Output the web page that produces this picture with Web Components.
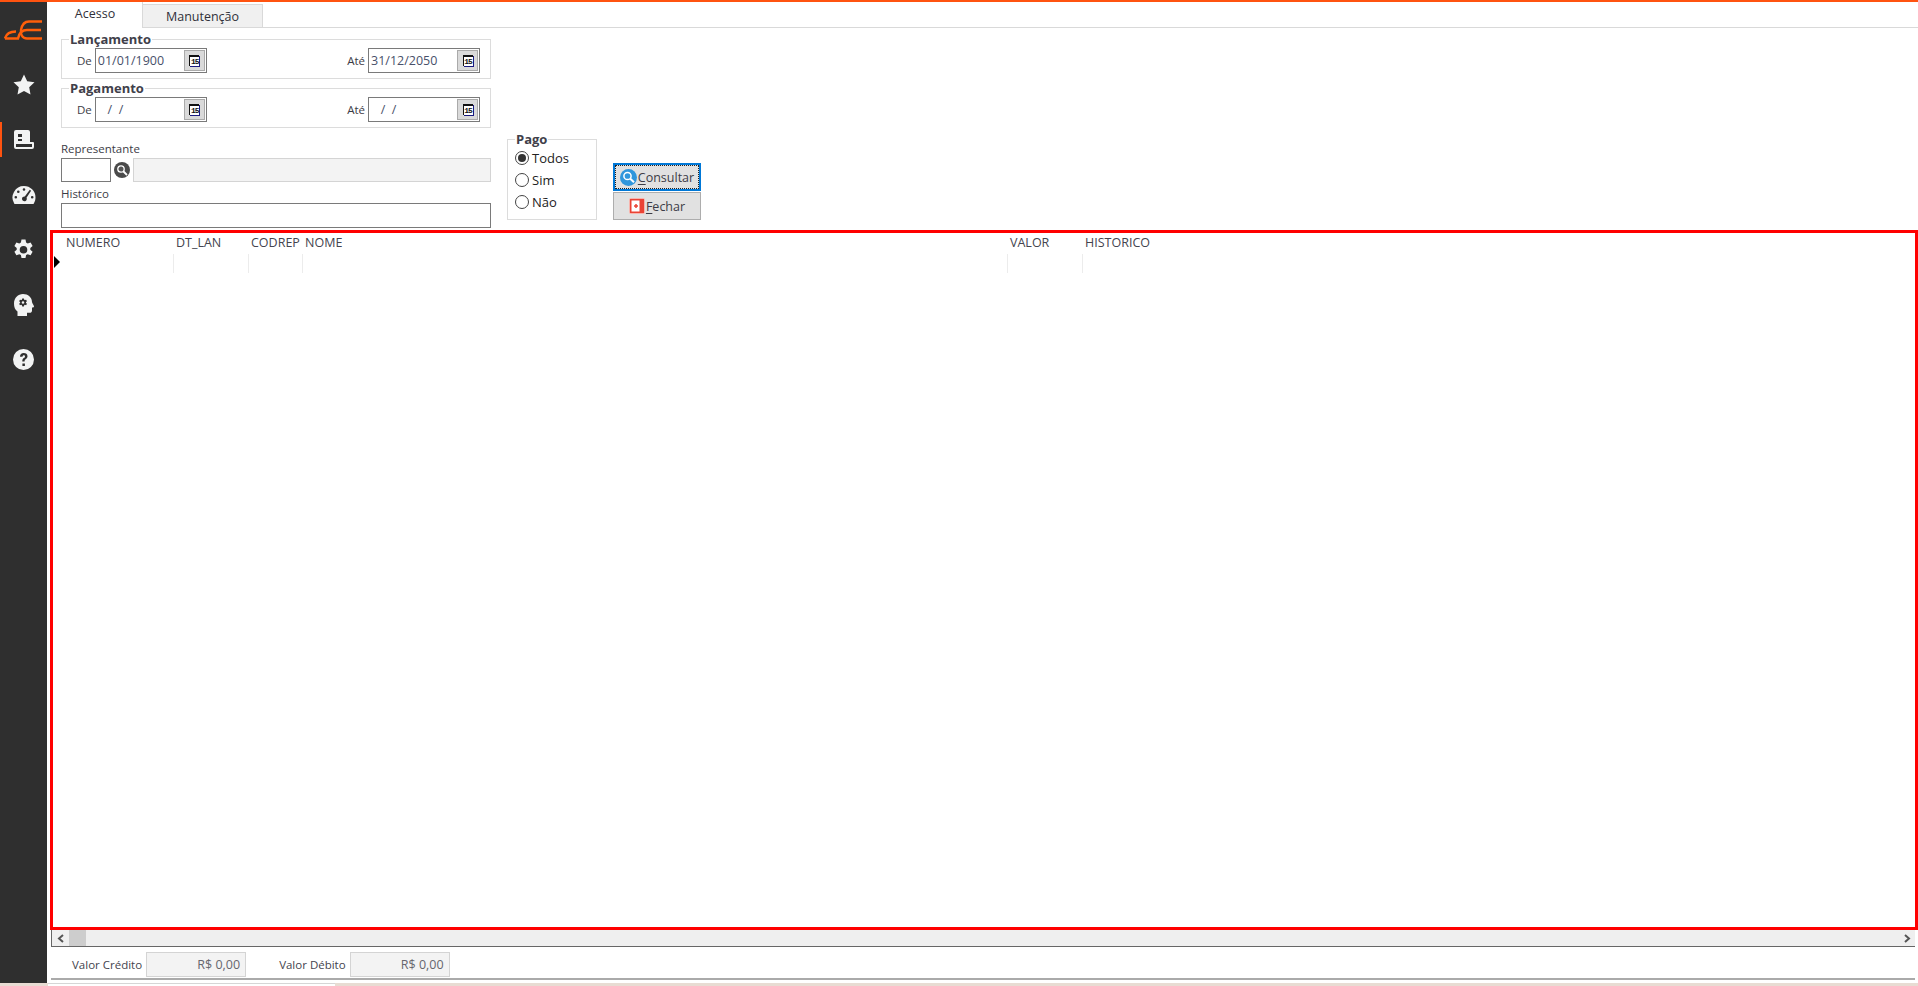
<!DOCTYPE html>
<html lang="pt-BR">
<head>
<meta charset="utf-8">
<title>Acesso</title>
<style>
  html, body { margin: 0; height: 100%; overflow: hidden; background: #fff; }
  body { font: 12px "Open Sans", "Liberation Sans", sans-serif; color: #3c3c46; }
</style>
</head>
<body>
<erp-app>
  <side-nav slot="nav"></side-nav>
  <tab-strip></tab-strip>
  <filter-panel></filter-panel>
  <data-grid></data-grid>
  <grid-scrollbar></grid-scrollbar>
  <totals-bar></totals-bar>
</erp-app>

<script>
customElements.define(
  "erp-app",
  class extends HTMLElement {
    constructor() {
      super();
      this.attachShadow({ mode: "open" });
      this.shadowRoot.innerHTML = `
        <style>
          :host { display: flex; flex-direction: column; height: 986px; }
          .top { height: 2px; background: #ff5310; flex: none; }
          .body { flex: 1; display: flex; min-height: 0; }
          .main { flex: 1; min-width: 0; display: flex; flex-direction: column; padding-left: 1px; }
          .end { flex: none; height: 3px; background: #e8dcd3; padding-left: 48px; }
          .end div { width: 287px; height: 3px; background: #fff; border-top: 1px solid #d6d6d6; box-sizing: border-box; }
        </style>
        <div class="top"></div>
        <div class="body">
          <slot name="nav"></slot>
          <div class="main"><slot></slot></div>
        </div>
        <div class="end"><div></div></div>
      `;
    }
  }
);

customElements.define(
  "nav-icon",
  class extends HTMLElement {
    constructor() {
      super();
      this.attachShadow({ mode: "open" });
      this.shadowRoot.innerHTML = `
        <style>
          :host { display: flex; align-items: center; justify-content: center; height: 35px; margin-bottom: 20px; box-sizing: border-box; }
          :host([active]) { box-shadow: inset 2px 0 0 #ff5310; }
        </style>
        <slot></slot>
      `;
    }
  }
);

customElements.define(
  "side-nav",
  class extends HTMLElement {
    constructor() {
      super();
      this.attachShadow({ mode: "open" });
      this.shadowRoot.innerHTML = `
        <style>
          :host { display: block; width: 47px; flex: none; background: #2f2f2f; }
          .logo { height: 48px; display: flex; align-items: flex-start; justify-content: center; padding-top: 18px; box-sizing: border-box; }
          .items { padding-top: 17px; }
          svg { display: block; fill: #f2f3f3; }
        </style>
        <div class="logo">
          <svg width="40" height="20" viewBox="0 0 40 20" style="fill:none;stroke:#ff5f0a;stroke-width:2.4">
            <path d="M1 18.5h13c1-5 4-8.500 9-8.500h14"/>
            <path d="M1 18.500c1-4 5-7 11-7"/>
            <path d="M38 1.500H25c-4 0-7 3-8 8.500-.6 4 1 8.500 6 8.500h15"/>
          </svg>
        </div>
        <div class="items">
          <nav-icon>
            <svg width="22" height="21" viewBox="0 0 22 21"><path d="M11 .5l3.200 6.700 7.300 1-5.300 5.100 1.300 7.200L11 17l-6.500 3.500 1.300-7.200L.5 8.200l7.300-1z"/></svg>
          </nav-icon>
          <nav-icon active>
            <svg width="20" height="20" viewBox="0 0 20 20"><path fill-rule="evenodd" d="M2 0h12a2 2 0 0 1 2 2v10h3a1 1 0 0 1 1 1v4a2 2 0 0 1-2 2H2a2 2 0 0 1-2-2V2a2 2 0 0 1 2-2zM4 4v3h4V4zm0 5v2h4V9zM2 14v3h16v-3z"/></svg>
          </nav-icon>
          <nav-icon>
            <svg width="24" height="20" viewBox="0 0 24 20"><path fill-rule="evenodd" d="M12 1a11.500 11.500 0 0 1 11.500 11.500c0 2.200-.6 4.200-1.700 6a1 1 0 0 1-.9.500H3.100a1 1 0 0 1-.9-.5A11.500 11.500 0 0 1 12 1zM12 3.200a1.300 1.300 0 1 0 0 2.600 1.300 1.300 0 0 0 0-2.600zM6.300 5.500a1.300 1.300 0 1 0 0 2.600 1.300 1.300 0 0 0 0-2.600zM3.800 11a1.300 1.300 0 1 0 0 2.600 1.300 1.300 0 0 0 0-2.600zM20.200 11a1.300 1.300 0 1 0 0 2.600 1.300 1.300 0 0 0 0-2.600zM17.800 4.800l-5 6.700a2.400 2.400 0 1 0 1.700 1.200l4.600-7z"/></svg>
          </nav-icon>
          <nav-icon>
            <svg width="21" height="22" viewBox="0 0 21 22"><path fill-rule="evenodd" d="M8.500.5h4l.6 3 1.600.9 2.900-1 2 3.500-2.300 2v1.800l2.300 2-2 3.500-2.900-1-1.600.9-.6 3h-4l-.6-3-1.600-.9-2.900 1-2-3.500 2.300-2V8.900l-2.300-2 2-3.500 2.900 1 1.600-.9zM10.500 7a3.800 3.800 0 1 0 0 7.600 3.800 3.800 0 0 0 0-7.600z"/></svg>
          </nav-icon>
          <nav-icon>
            <svg width="21" height="22" viewBox="0 0 21 22"><path fill-rule="evenodd" d="M10 0c5 0 9 3.400 9 8 0 .8 2 3.600 2 4.400 0 .6-.7 1.100-1.700 1.100H19v3.200c0 1.200-1 2.100-2.200 2.100H14V22H4.500v-4.400C2 15.800 1 13 1 9.500 1 4 5 0 10 0zm-.8 4.500l-.3 1.200-.7.4-1.200-.4-.9 1.500 1 .8v.9l-1 .8.900 1.500 1.200-.4.700.4.300 1.200h1.700l.3-1.200.7-.4 1.200.4.900-1.500-1-.8V8l1-.8-.9-1.500-1.200.4-.7-.4-.3-1.200zM10 7.200a1.300 1.300 0 1 1 0 2.600 1.300 1.300 0 0 1 0-2.600z"/></svg>
          </nav-icon>
          <nav-icon>
            <svg width="21" height="21" viewBox="0 0 21 21"><path fill-rule="evenodd" d="M10.500 0a10.500 10.500 0 1 1 0 21 10.500 10.500 0 0 1 0-21zM7 7.800h2.500c.1-1 .6-1.500 1.300-1.500s1.200.5 1.200 1.100c0 .7-.5 1.100-1.200 1.600-1 .7-1.500 1.500-1.500 2.900v.5h2.300v-.4c0-.8.300-1.200 1-1.700 1-.7 1.900-1.500 1.900-3 0-2-1.600-3.200-3.700-3.200C8.300 4.100 7 5.600 7 7.800zM9.400 14.500v2.400h2.500v-2.400z"/></svg>
          </nav-icon>
        </div>
      `;
    }
  }
);

customElements.define(
  "tab-strip",
  class extends HTMLElement {
    constructor() {
      super();
      this.attachShadow({ mode: "open" });
      this.shadowRoot.innerHTML = `
        <style>
          :host { display: flex; align-items: flex-end; height: 26px; flex: none; border-bottom: 1px solid #d9d9d9; box-sizing: border-box; font-size: 12.500px; color: #30303a; }
          .tab { box-sizing: border-box; text-align: center; }
          .on { width: 95px; height: 26px; margin-bottom: -1px; background: #fff; border-right: 1px solid #d9d9d9; line-height: 24px; }
          .off { width: 120px; height: 23px; background: #f0f0f0; border: 1px solid #d9d9d9; border-width: 1px 1px 0 0; line-height: 24px; }
        </style>
        <div class="tab on">Acesso</div>
        <div class="tab off">Manutenção</div>
      `;
    }
  }
);

customElements.define(
  "group-box",
  class extends HTMLElement {
    constructor() {
      super();
      this.attachShadow({ mode: "open" });
      this.shadowRoot.innerHTML = `
        <style>
          :host { display: block; box-sizing: border-box; border: 1px solid #dcdcdc; }
          .legend { display: table; margin: -9px 0 0 7px; padding: 0 1px; height: 17px; line-height: 17px; background: #fff; font-weight: 700; font-size: 13px; color: #40404a; }
          .content { display: flex; justify-content: space-between; align-items: center; }
        </style>
        <div class="legend"><slot name="legend"></slot></div>
        <div class="content" part="content"><slot></slot></div>
      `;
    }
  }
);

customElements.define(
  "date-field",
  class extends HTMLElement {
    constructor() {
      super();
      this.attachShadow({ mode: "open" });
      this.shadowRoot.innerHTML = `
        <style>
          :host { display: flex; align-items: center; gap: 3px; font-size: 11.500px; }
          .box { box-sizing: border-box; width: 112px; height: 25px; border: 1px solid #7a7a7a; display: flex; align-items: center; justify-content: space-between; padding: 0 1px 0 2px; font-size: 12.500px; color: #48506a; white-space: pre; }
          .btn { width: 21px; height: 21px; box-sizing: border-box; background: #dadada; border: 1px solid #aaa; display: flex; align-items: center; justify-content: center; }
          .cal { width: 10px; height: 11px; box-sizing: border-box; background: #fff; border-top: 2px solid #111; border-left: 1px solid #111; box-shadow: 1px 1px 0 #1b1b80; font: 700 8px/9px "Liberation Mono", monospace; letter-spacing: -1px; color: #111; text-align: center; overflow: hidden; }
        </style>
        <span class="label"></span>
        <div class="box"><span class="val"></span><span class="btn"><span class="cal">15</span></span></div>
      `;
    }
    connectedCallback() {
      this.shadowRoot.querySelector(".label").textContent = this.getAttribute("label");
      this.shadowRoot.querySelector(".val").textContent = this.getAttribute("value");
    }
  }
);

customElements.define(
  "radio-option",
  class extends HTMLElement {
    constructor() {
      super();
      this.attachShadow({ mode: "open" });
      this.shadowRoot.innerHTML = `
        <style>
          :host { display: flex; align-items: center; gap: 3px; height: 22px; font-size: 13px; color: #222; }
          .dot { width: 12px; height: 12px; border: 1px solid #444; border-radius: 50%; display: flex; align-items: center; justify-content: center; }
          :host([checked]) .dot::after { content: ""; width: 8px; height: 8px; border-radius: 50%; background: #333; }
        </style>
        <span class="dot"></span><slot></slot>
      `;
    }
  }
);

customElements.define(
  "action-button",
  class extends HTMLElement {
    constructor() {
      super();
      this.attachShadow({ mode: "open" });
      this.shadowRoot.innerHTML = `
        <style>
          :host { display: flex; box-sizing: border-box; width: 88px; height: 28px; background: #e1e1e1; border: 1px solid #adadad; font-size: 12.500px; color: #3c3c46; }
          :host([focused]) { border: 2px solid #0078d7; }
          .in { flex: 1; display: flex; align-items: center; justify-content: center; gap: 1px; }
          :host([focused]) .in { outline: 1px dotted #222; outline-offset: -1px; }
          ::slotted(u) { text-underline-offset: 2px; }
        </style>
        <div class="in"><slot name="icon"></slot><span><slot></slot></span></div>
      `;
    }
  }
);

customElements.define(
  "filter-panel",
  class extends HTMLElement {
    constructor() {
      super();
      this.attachShadow({ mode: "open" });
      this.shadowRoot.innerHTML = `
        <style>
          :host { display: flex; flex: none; height: 202px; box-sizing: border-box; padding: 11px 0 0 13px; color: #3c3c46; }
          .left { width: 430px; display: flex; flex-direction: column; }
          group-box.dates { height: 40px; margin-bottom: 9px; }
          group-box.dates::part(content) { padding: 0 10px 0 15px; }
          .small { font-size: 11.500px; line-height: 14px; }
          .rep { display: flex; align-items: center; margin: 2px 0 5px; height: 24px; }
          .code { box-sizing: border-box; width: 50px; height: 24px; border: 1px solid #7a7a7a; }
          svg { display: block; flex: none; }
          .lens { margin: 0 3px 0 3px; }
          .name { box-sizing: border-box; flex: 1; height: 24px; background: #f3f3f3; border: 1px solid #d4d4d4; }
          .hist { box-sizing: border-box; height: 25px; margin-top: 2px; border: 1px solid #7a7a7a; }
          group-box.pago { width: 90px; height: 81px; margin: 100px 0 0 16px; }
          group-box.pago::part(content) { flex-direction: column; align-items: stretch; padding: 0 0 0 7px; margin-top: -1px; }
          .actions { margin: 124px 0 0 16px; display: flex; flex-direction: column; gap: 1px; }
        </style>
        <div class="left">
          <group-box class="dates">
            <span slot="legend">Lançamento</span>
            <date-field label="De" value="01/01/1900"></date-field>
            <date-field label="Até" value="31/12/2050"></date-field>
          </group-box>
          <group-box class="dates">
            <span slot="legend">Pagamento</span>
            <date-field label="De" value="   /  /"></date-field>
            <date-field label="Até" value="   /  /"></date-field>
          </group-box>
          <div class="small" style="margin-top:5px">Representante</div>
          <div class="rep">
            <div class="code"></div>
            <svg class="lens" width="16" height="16" viewBox="0 0 16 16"><circle cx="8" cy="8" r="8" fill="#4a4a4a"/><circle cx="7" cy="7" r="3.200" fill="#555" stroke="#fff" stroke-width="1.300"/><path d="M9.500 9.500l3.500 3.500" stroke="#fff" stroke-width="1.800"/></svg>
            <div class="name"></div>
          </div>
          <div class="small">Histórico</div>
          <div class="hist"></div>
        </div>
        <group-box class="pago">
          <span slot="legend">Pago</span>
          <radio-option checked>Todos</radio-option>
          <radio-option>Sim</radio-option>
          <radio-option>Não</radio-option>
        </group-box>
        <div class="actions">
          <action-button focused>
            <svg slot="icon" width="17" height="17" viewBox="0 0 17 17"><circle cx="8.500" cy="8.500" r="8.500" fill="#2f96dc"/><circle cx="7.500" cy="7" r="3.600" fill="#2f96dc" stroke="#fff" stroke-width="1.500"/><path d="M10.300 9.800l3.700 3.500" stroke="#fff" stroke-width="2"/></svg>
            <u>C</u>onsultar
          </action-button>
          <action-button>
            <svg slot="icon" width="16" height="16" viewBox="0 0 16 16"><rect width="16" height="16" rx="2" fill="#f7b4ad"/><rect x="1" y="1" width="14" height="14" fill="#ea4335"/><rect x="2.500" y="2.500" width="8" height="11" fill="#fff"/><path d="M5 8h4M7 6v4" stroke="#ea4335" stroke-width="1.500"/></svg>
            <u>F</u>echar
          </action-button>
        </div>
      `;
    }
  }
);

customElements.define(
  "grid-column",
  class extends HTMLElement {
    constructor() {
      super();
      this.attachShadow({ mode: "open" });
      this.shadowRoot.innerHTML = `
        <style>
          :host { display: flex; flex-direction: column; flex: none; box-sizing: border-box; font-size: 12.500px; color: #44444e; }
          .head { height: 21px; line-height: 20px; padding-left: 2px; white-space: nowrap; }
          .cell { height: 19px; border-right: 1px solid #ececec; }
          :host([last]) .cell { border-right: 0; }
        </style>
        <div class="head"><slot></slot></div>
        <div class="cell"></div>
      `;
    }
  }
);

customElements.define(
  "data-grid",
  class extends HTMLElement {
    constructor() {
      super();
      this.attachShadow({ mode: "open" });
      this.shadowRoot.innerHTML = `
        <style>
          :host { display: block; flex: 1; min-height: 0; box-sizing: border-box; margin: 0 0 0 2px; border: 3px solid #ff0000; }
          .row { display: flex; }
          .ind { width: 11px; flex: none; padding-top: 21px; box-sizing: border-box; }
          .tri { margin: 2px 0 0 1px; width: 0; height: 0; border-left: 6px solid #000; border-top: 6px solid transparent; border-bottom: 6px solid transparent; }
        </style>
        <div class="row">
          <div class="ind"><div class="tri"></div></div>
          <grid-column style="width:110px">NUMERO</grid-column>
          <grid-column style="width:75px">DT_LAN</grid-column>
          <grid-column style="width:54px">CODREP</grid-column>
          <grid-column style="width:705px">NOME</grid-column>
          <grid-column style="width:75px">VALOR</grid-column>
          <grid-column last style="width:200px">HISTORICO</grid-column>
        </div>
      `;
    }
  }
);

customElements.define(
  "grid-scrollbar",
  class extends HTMLElement {
    constructor() {
      super();
      this.attachShadow({ mode: "open" });
      this.shadowRoot.innerHTML = `
        <style>
          :host { display: flex; flex: none; align-items: stretch; height: 17px; margin: 0 3px 0 3px; background: #efefef; border-left: 1px solid #666; border-bottom: 1px solid #666; box-sizing: border-box; }
          .arrow { width: 17px; display: flex; align-items: center; justify-content: center; }
          .thumb { width: 17px; background: #cdcdcd; }
          .track { flex: 1; }
          svg { display: block; fill: none; stroke: #555; stroke-width: 2; }
        </style>
        <div class="arrow"><svg width="8" height="9" viewBox="0 0 8 9"><path d="M6 1L2 4.500 6 8"/></svg></div>
        <div class="thumb"></div>
        <div class="track"></div>
        <div class="arrow"><svg width="8" height="9" viewBox="0 0 8 9"><path d="M2 1l4 3.500L2 8"/></svg></div>
      `;
    }
  }
);

customElements.define(
  "total-field",
  class extends HTMLElement {
    constructor() {
      super();
      this.attachShadow({ mode: "open" });
      this.shadowRoot.innerHTML = `
        <style>
          :host { display: flex; align-items: center; gap: 4px; font-size: 11.500px; color: #44444e; }
          .box { box-sizing: border-box; width: 100px; height: 25px; background: #f3f3f3; border: 1px solid #d4d4d4; line-height: 23px; text-align: right; padding-right: 5px; font-size: 12.500px; color: #66666e; }
        </style>
        <span><slot></slot></span><div class="box">R$ 0,00</div>
      `;
    }
  }
);

customElements.define(
  "totals-bar",
  class extends HTMLElement {
    constructor() {
      super();
      this.attachShadow({ mode: "open" });
      this.shadowRoot.innerHTML = `
        <style>
          :host { display: flex; flex: none; gap: 33px; height: 33px; box-sizing: border-box; margin: 0 3px 3px 3px; padding: 3px 0 0 21px; border-bottom: 2px solid #aaa; }
        </style>
        <total-field>Valor Crédito</total-field>
        <total-field>Valor Débito</total-field>
      `;
    }
  }
);
</script>
</body>
</html>
